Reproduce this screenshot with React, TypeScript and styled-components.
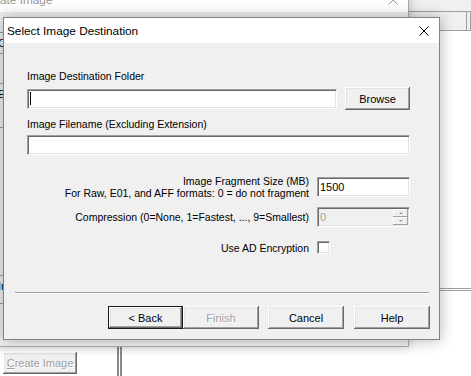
import styled, { createGlobalStyle } from 'styled-components';

const GlobalStyle = createGlobalStyle`
  html, body {
    margin: 0;
    padding: 0;
    background: #fff;
  }
  body {
    width: 471px;
    height: 376px;
    overflow: hidden;
    font-family: 'Liberation Sans', Arial, sans-serif;
  }
`;

const Desktop = styled.div`
  position: relative;
  width: 471px;
  height: 376px;
  overflow: hidden;
  background: #fff;
`;

/* main application window, behind everything */
const MainWindow = styled.div`
  position: absolute;
  inset: 0;
  display: flex;
  flex-direction: column;
  background: #fff;
`;

const TopStrip = styled.div`
  height: 11px;
  background: #f0f0f0;
`;

const HeaderRow = styled.div`
  display: flex;
  height: 18px;
  background: #f0f0f0;
  border-top: 1px solid #a0a0a0;
  border-bottom: 1px solid #a0a0a0;
`;

const HeaderCell = styled.div<{ $w?: number }>`
  width: ${(p) => (p.$w ? `${p.$w}px` : 'auto')};
  flex: ${(p) => (p.$w ? 'none' : 1)};
  border-right: 1px solid #a0a0a0;
`;

const UpperPane = styled.div`
  height: 257px;
  border-bottom: 3px double #a0a0a0;
`;

const LowerPane = styled.div`
  flex: 1;
  display: flex;
`;

const LeftPane = styled.div`
  width: 114px;
  padding: 61px 0 0 3px;
`;

const RightPane = styled.div`
  flex: 1;
  border-left: 5px double #8a8a8a;
`;

const ClassicButton = styled.div<{ $w: number; $h?: number; $default?: boolean; $disabled?: boolean; $gap?: number }>`
  box-sizing: border-box;
  width: ${(p) => p.$w}px;
  height: ${(p) => p.$h ?? 23}px;
  margin-left: ${(p) => p.$gap ?? 0}px;
  display: flex;
  align-items: center;
  justify-content: center;
  background: #f0f0f0;
  font-size: 11px;
  color: ${(p) => (p.$disabled ? '#a0a0a0' : '#000')};
  text-shadow: ${(p) => (p.$disabled ? '1px 1px #fff' : 'none')};
  border: ${(p) => (p.$default ? '1px solid #1a1a1a' : 'none')};
  box-shadow: inset -1px -1px #696969, inset 1px 1px #fff, inset -2px -2px #a0a0a0,
    inset 2px 2px #e3e3e3;
  flex: none;
`;

const Mnemonic = styled.span`
  text-decoration: underline;
`;

/* the "Create Image" window, partly hidden by the dialog */
const CreateImageWindow = styled.div`
  position: absolute;
  left: -30px;
  top: -14px;
  width: 439px;
  height: 361px;
  box-sizing: border-box;
  display: flex;
  flex-direction: column;
  background: #f0f0f0;
  border: 1px solid #aaaaaa;
  box-shadow: 0 0 10px rgba(0, 0, 0, 0.22);
`;

const TitleBar = styled.div<{ $inactive?: boolean }>`
  height: 25px;
  flex: none;
  display: flex;
  align-items: center;
  background: #fff;
  font-family: 'Segoe UI', 'Liberation Sans', Arial, sans-serif;
  font-size: 11.8px;
  color: ${(p) => (p.$inactive ? '#999' : '#000')};
`;

const TitleText = styled.div<{ $pad: number }>`
  flex: 1;
  padding-left: ${(p) => p.$pad}px;
  white-space: nowrap;
`;

const CloseButton = styled.div`
  width: 30px;
  height: 100%;
  display: flex;
  align-items: center;
  justify-content: center;
`;

const BackBody = styled.div`
  flex: 1;
  padding: 10px 0 0 22px;
  display: flex;
  flex-direction: column;
`;

const BackItem = styled.div<{ $top: number; $h: number }>`
  margin-top: ${(p) => p.$top}px;
  height: ${(p) => p.$h}px;
  width: 160px;
  box-sizing: border-box;
  border: 1px solid #a0a0a0;
  padding: 4px 0 0 4px;
  font-size: 11px;
  color: #000;
  white-space: nowrap;
`;

/* foreground dialog */
const Dialog = styled.div`
  position: absolute;
  left: 3px;
  top: 17px;
  width: 437px;
  height: 323px;
  box-sizing: border-box;
  display: flex;
  flex-direction: column;
  background: #f0f0f0;
  border: 1px solid #838383;
  box-shadow: 0 0 14px rgba(0, 0, 0, 0.3);
`;

const Body = styled.div`
  display: flex;
  flex-direction: column;
  padding: 27px 29px 0 23px;
  font-size: 10.5px;
  color: #000;
`;

const Label = styled.div<{ $top?: number }>`
  margin-top: ${(p) => p.$top ?? 0}px;
  line-height: 13px;
  white-space: nowrap;
`;

const BrowseRow = styled.div`
  margin-top: 4px;
  display: flex;
  align-items: center;
  gap: 8px;
`;

const TextBox = styled.div<{ $w?: number; $top?: number; $disabled?: boolean }>`
  box-sizing: border-box;
  width: ${(p) => (p.$w ? `${p.$w}px` : '100%')};
  height: 20px;
  margin-top: ${(p) => p.$top ?? 0}px;
  display: flex;
  align-items: center;
  padding-left: 2px;
  background: ${(p) => (p.$disabled ? '#f0f0f0' : '#fff')};
  color: ${(p) => (p.$disabled ? '#a0a0a0' : '#000')};
  border-top: 1px solid #a0a0a0;
  border-left: 1px solid #a0a0a0;
  border-bottom: 1px solid #fff;
  border-right: 1px solid #fff;
  box-shadow: inset 1px 1px #696969, inset -1px -1px #e3e3e3;
  font-size: 11px;
  flex: none;
`;

const Caret = styled.span`
  width: 1px;
  height: 13px;
  background: #000;
`;

const Spinner = styled.div`
  margin-left: auto;
  margin-right: 1px;
  width: 15px;
  height: 16px;
  display: flex;
  flex-direction: column;
`;

const SpinButton = styled.div<{ $down?: boolean }>`
  flex: 1;
  display: flex;
  align-items: center;
  justify-content: center;
  background: #f0f0f0;
  box-shadow: inset -1px -1px #a0a0a0, inset 1px 1px #fff;

  &::after {
    content: '';
    border-left: 2px solid transparent;
    border-right: 2px solid transparent;
    ${(p) => (p.$down ? 'border-top: 2px solid #a0a0a0;' : 'border-bottom: 2px solid #a0a0a0;')}
  }
`;

const OptionRow = styled.div<{ $top: number; $align?: string }>`
  margin-top: ${(p) => p.$top}px;
  display: grid;
  grid-template-columns: 1fr 93px;
  column-gap: 8px;
  align-items: ${(p) => p.$align ?? 'center'};
`;

const FieldLabel = styled.div`
  justify-self: end;
  text-align: right;
  line-height: 12px;
  white-space: nowrap;
`;

const CheckBox = styled.div`
  box-sizing: border-box;
  width: 13px;
  height: 13px;
  background: #fff;
  border-top: 1px solid #a0a0a0;
  border-left: 1px solid #a0a0a0;
  border-bottom: 1px solid #fff;
  border-right: 1px solid #fff;
  box-shadow: inset 1px 1px #696969, inset -1px -1px #e3e3e3;
`;

const Footer = styled.div`
  margin-top: auto;
  padding: 0 9px 10px 11px;
`;

const Separator = styled.div`
  margin-right: 1px;
  border-top: 1px solid #a0a0a0;
  border-bottom: 1px solid #fff;
`;

const ButtonRow = styled.div`
  margin-top: 12px;
  display: flex;
  justify-content: flex-end;
`;

const CloseIcon = ({ color }: { color: string }) => (
  <svg width="10" height="10" viewBox="0 0 10 10">
    <path d="M0.5 0.5 L9.5 9.5 M9.5 0.5 L0.5 9.5" stroke={color} strokeWidth="1" fill="none" />
  </svg>
);

const App = () => {
  return (
    <Desktop>
      <GlobalStyle />
      <MainWindow>
        <TopStrip />
        <HeaderRow>
          <HeaderCell $w={466} />
          <HeaderCell />
        </HeaderRow>
        <UpperPane />
        <LowerPane>
          <LeftPane>
            <ClassicButton $w={74} $h={22} $disabled>
              <span>
                <Mnemonic>C</Mnemonic>reate Image
              </span>
            </ClassicButton>
          </LeftPane>
          <RightPane />
        </LowerPane>
      </MainWindow>

      <CreateImageWindow>
        <TitleBar $inactive>
          <TitleText $pad={10}>Create Image</TitleText>
          <CloseButton>
            <CloseIcon color="#999" />
          </CloseButton>
        </TitleBar>
        <BackBody>
          <BackItem $top={10} $h={22}>Create Directory Listing</BackItem>
          <BackItem $top={29} $h={45}>Evidence Item</BackItem>
          <BackItem $top={147} $h={29}>Image Destination(s)</BackItem>
        </BackBody>
      </CreateImageWindow>

      <Dialog>
        <TitleBar>
          <TitleText $pad={3}>Select Image Destination</TitleText>
          <CloseButton>
            <CloseIcon color="#000" />
          </CloseButton>
        </TitleBar>
        <Body>
          <Label>Image Destination Folder</Label>
          <BrowseRow>
            <TextBox $w={310}>
              <Caret />
            </TextBox>
            <ClassicButton $w={65}>Browse</ClassicButton>
          </BrowseRow>
          <Label $top={8}>Image Filename (Excluding Extension)</Label>
          <TextBox $top={4} />
          <OptionRow $top={20} $align="start">
            <FieldLabel>
              Image Fragment Size (MB)
              <br />
              For Raw, E01, and AFF formats: 0 = do not fragment
            </FieldLabel>
            <TextBox $top={2}>1500</TextBox>
          </OptionRow>
          <OptionRow $top={8}>
            <FieldLabel>Compression (0=None, 1=Fastest, ..., 9=Smallest)</FieldLabel>
            <TextBox $disabled>
              0
              <Spinner>
                <SpinButton />
                <SpinButton $down />
              </Spinner>
            </TextBox>
          </OptionRow>
          <OptionRow $top={14}>
            <FieldLabel>Use AD Encryption</FieldLabel>
            <CheckBox />
          </OptionRow>
        </Body>
        <Footer>
          <Separator />
          <ButtonRow>
            <ClassicButton $w={75} $default>
              &lt; Back
            </ClassicButton>
            <ClassicButton $w={76} $disabled>
              Finish
            </ClassicButton>
            <ClassicButton $w={76} $gap={9}>
              Cancel
            </ClassicButton>
            <ClassicButton $w={76} $gap={10}>
              Help
            </ClassicButton>
          </ButtonRow>
        </Footer>
      </Dialog>
    </Desktop>
  );
};

export default App;
